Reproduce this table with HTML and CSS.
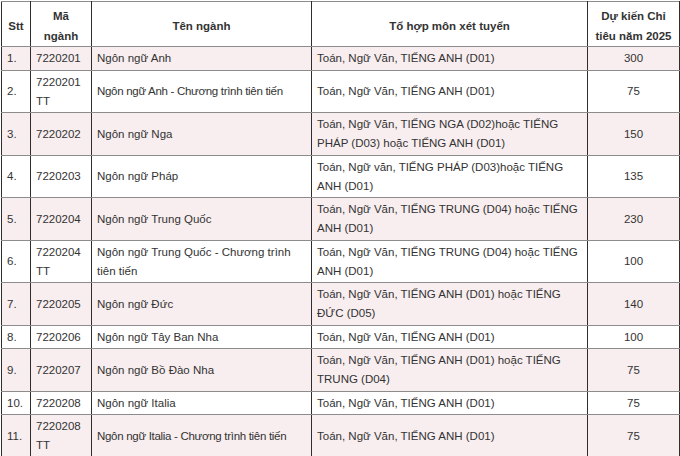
FILE: index.html
```html
<!DOCTYPE html>
<html lang="vi">
<head>
<meta charset="utf-8">
<title>Chỉ tiêu</title>
<link rel="stylesheet" href="styles.css">
</head>
<body>
<table class="quota">
  <colgroup>
    <col class="c-stt">
    <col class="c-code">
    <col class="c-name">
    <col class="c-combo">
    <col class="c-num">
  </colgroup>
  <thead>
    <tr>
      <th>Stt</th>
      <th>Mã<br>ngành</th>
      <th>Tên ngành</th>
      <th>Tổ hợp môn xét tuyển</th>
      <th>Dự kiến Chỉ<br>tiêu năm 2025</th>
    </tr>
  </thead>
  <tbody>
    <tr class="odd">
      <td>1.</td><td>7220201</td><td>Ngôn ngữ Anh</td>
      <td>Toán, Ngữ Văn, TIẾNG ANH (D01)</td><td class="num">300</td>
    </tr>
    <tr>
      <td>2.</td><td>7220201<br>TT</td><td><span class="tight">Ngôn ngữ Anh - Chương trình tiên tiến</span></td>
      <td>Toán, Ngữ Văn, TIẾNG ANH (D01)</td><td class="num">75</td>
    </tr>
    <tr class="odd">
      <td>3.</td><td>7220202</td><td>Ngôn ngữ Nga</td>
      <td>Toán, Ngữ Văn, TIẾNG NGA (D02)hoặc TIẾNG<br>PHÁP (D03) hoặc TIẾNG ANH (D01)</td><td class="num">150</td>
    </tr>
    <tr>
      <td>4.</td><td>7220203</td><td>Ngôn ngữ Pháp</td>
      <td>Toán, Ngữ văn, TIẾNG PHÁP (D03)hoặc TIẾNG<br>ANH (D01)</td><td class="num">135</td>
    </tr>
    <tr class="odd">
      <td>5.</td><td>7220204</td><td>Ngôn ngữ Trung Quốc</td>
      <td>Toán, Ngữ Văn, TIẾNG TRUNG (D04) hoặc TIẾNG<br>ANH (D01)</td><td class="num">230</td>
    </tr>
    <tr>
      <td>6.</td><td>7220204<br>TT</td><td>Ngôn ngữ Trung Quốc - Chương trình<br>tiên tiến</td>
      <td>Toán, Ngữ Văn, TIẾNG TRUNG (D04) hoặc TIẾNG<br>ANH (D01)</td><td class="num">100</td>
    </tr>
    <tr class="odd">
      <td>7.</td><td>7220205</td><td>Ngôn ngữ Đức</td>
      <td>Toán, Ngữ Văn, TIẾNG ANH (D01) hoặc TIẾNG<br>ĐỨC (D05)</td><td class="num">140</td>
    </tr>
    <tr>
      <td>8.</td><td>7220206</td><td>Ngôn ngữ Tây Ban Nha</td>
      <td>Toán, Ngữ Văn, TIẾNG ANH (D01)</td><td class="num">100</td>
    </tr>
    <tr class="odd">
      <td>9.</td><td>7220207</td><td>Ngôn ngữ Bồ Đào Nha</td>
      <td>Toán, Ngữ Văn, TIẾNG ANH (D01) hoặc TIẾNG<br>TRUNG (D04)</td><td class="num">75</td>
    </tr>
    <tr>
      <td>10.</td><td>7220208</td><td>Ngôn ngữ Italia</td>
      <td>Toán, Ngữ Văn, TIẾNG ANH (D01)</td><td class="num">75</td>
    </tr>
    <tr class="odd">
      <td>11.</td><td>7220208<br>TT</td><td><span class="tight">Ngôn ngữ Italia - Chương trình tiên tiến</span></td>
      <td>Toán, Ngữ Văn, TIẾNG ANH (D01)</td><td class="num">75</td>
    </tr>
  </tbody>
</table>
</body>
</html>
```

FILE: styles.css
```css
html, body {
  margin: 0;
  padding: 0;
  background: #ffffff;
}

body {
  padding: 1px 0 0 1px;
  font-family: "Liberation Sans", Arial, sans-serif;
  font-size: 11.5px;
  color: #333333;
}

.quota {
  border-collapse: collapse;
  table-layout: fixed;
  width: 678px;
}

.c-stt { width: 29px; }
.c-code { width: 61px; }
.c-name { width: 220px; }
.c-combo { width: 276px; }
.c-num { width: 92px; }

.quota th,
.quota td {
  border-left: 1px solid #2e2e2e;
  border-right: 1px solid #2e2e2e;
  border-top: 1px solid #8c8c8c;
  border-bottom: 1px solid #8c8c8c;
  vertical-align: middle;
  text-align: left;
  white-space: nowrap;
}

.quota th {
  font-weight: bold;
  text-align: center;
  line-height: 20px;
  padding: 4px 5px 0 5px;
  height: 43px;
  box-sizing: border-box;
}

.quota td {
  line-height: 19px;
  padding: 2px 5px 1.5px 5px;
}

.quota td.num {
  text-align: center;
}

.quota tr.odd td {
  background: #f8eeef;
}

.tight {
  letter-spacing: -0.3px;
}
```
